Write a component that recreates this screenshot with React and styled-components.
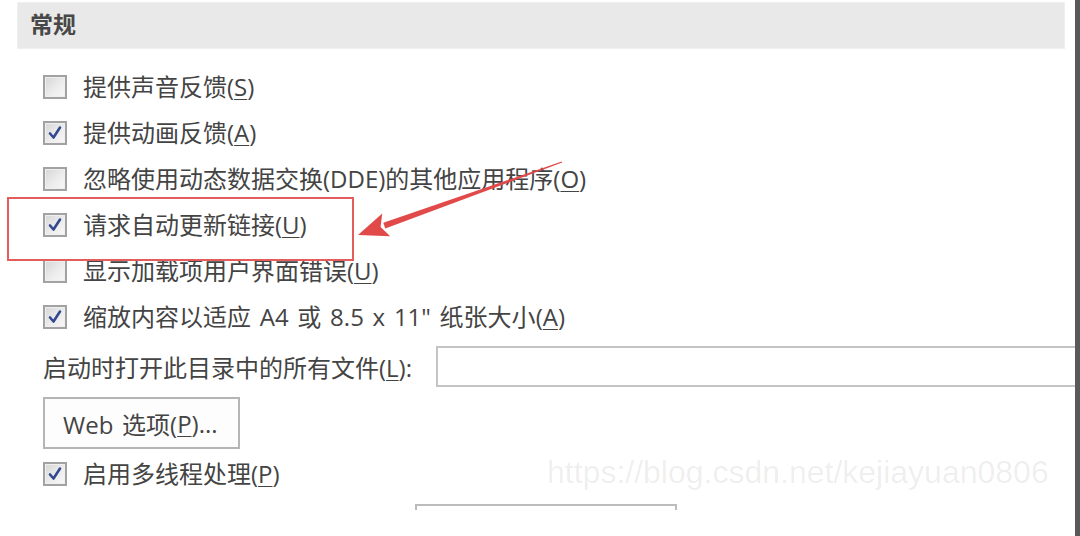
import React from "react";
import styled, { createGlobalStyle } from "styled-components";

const GlobalStyle = createGlobalStyle`
  html, body {
    margin: 0;
    padding: 0;
    background: #fff;
  }
  body {
    font-family: "Open Sans", "Noto Sans CJK SC", sans-serif;
    color: #444;
  }
`;

const Page = styled.div`
  position: relative;
  display: flex;
  width: 1080px;
  height: 536px;
  overflow: hidden;
  background: #fff;
`;

const Main = styled.div`
  flex: 1;
  display: flex;
  flex-direction: column;
  padding-top: 2px;
`;

const Edge = styled.div`
  width: 5px;
  background: #595959;
`;

const SectionHeader = styled.div`
  margin-left: 17px;
  width: 1048px;
  height: 47px;
  box-sizing: border-box;
  display: flex;
  align-items: center;
  padding: 0 0 5px 12px;
  background: #e9e9e9;
  border: 1px solid #efefef;
  font-family: "Noto Sans CJK SC", sans-serif;
  font-size: 23px;
  font-weight: 700;
  color: #484848;
`;

const Options = styled.div`
  display: flex;
  flex-direction: column;
  padding-left: 43px;
  margin-top: 15px;
  font-size: 24px;
  word-spacing: 2.5px;
`;

const Row = styled.label`
  display: flex;
  align-items: center;
  gap: 16px;
  height: 46px;
  margin-top: ${(p) => p.$top || 0}px;
  line-height: 1.2;
`;

const Box = styled.span`
  position: relative;
  width: 24px;
  height: 24px;
  box-sizing: border-box;
  flex: none;
  border: 2px solid #a2a2a2;
  background: linear-gradient(135deg, #d6d6d6 0%, #ececec 55%, #f8f8f8 100%);
  box-shadow: inset 0 0 0 1px #efefef;

  svg {
    position: absolute;
    left: 1px;
    top: 1px;
  }
`;

const Key = styled.span`
  text-decoration: underline;
  text-underline-offset: 3px;
  text-decoration-thickness: 1px;
`;

const FieldRow = styled.div`
  display: flex;
  align-items: center;
  margin-top: 6px;
  height: 41px;
`;

const FieldLabel = styled.span`
  width: 393px;
  flex: none;
  white-space: nowrap;
`;

const PathInput = styled.div`
  flex: 1;
  height: 41px;
  box-sizing: border-box;
  border: 2px solid #c4c4c4;
  border-right: none;
  background: #fff;
`;

const Button = styled.div`
  display: flex;
  align-items: center;
  width: 197px;
  height: 52px;
  box-sizing: border-box;
  margin-top: 10px;
  padding-left: 18px;
  border: 2px solid #b5b5b5;
  background: #fdfdfd;
  white-space: pre;
`;

const ListBoxTop = styled.div`
  margin-left: 415px;
  margin-top: 7px;
  width: 262px;
  height: 6px;
  box-sizing: border-box;
  border: 2px solid #bcbcbc;
  border-bottom: none;
`;

const Highlight = styled.div`
  position: absolute;
  left: 7px;
  top: 197px;
  width: 347px;
  height: 64px;
  box-sizing: border-box;
  border: 2px solid #e35d5d;
`;

const Arrow = styled.svg`
  position: absolute;
  left: 0;
  top: 0;
  pointer-events: none;
`;

const Watermark = styled.div`
  position: absolute;
  left: 547px;
  top: 454px;
  font-family: "Liberation Sans", Arial, sans-serif;
  font-size: 32px;
  color: rgba(0, 0, 0, 0.075);
  white-space: nowrap;
`;

const Check = ({ checked }) => (
  <Box>
    {checked && (
      <svg width="18" height="18" viewBox="0 0 18 18">
        <path
          d="M4 9.5 L7.5 13.5 L14 3.5"
          fill="none"
          stroke="#34478f"
          strokeWidth="2.6"
          strokeLinecap="round"
          strokeLinejoin="round"
        />
      </svg>
    )}
  </Box>
);

const options = [
  { text: "提供声音反馈", key: "S", checked: false },
  { text: "提供动画反馈", key: "A", checked: true },
  { text: "忽略使用动态数据交换(DDE)的其他应用程序", key: "O", checked: false },
  { text: "请求自动更新链接", key: "U", checked: true },
  { text: "显示加载项用户界面错误", key: "U", checked: false },
  { text: "缩放内容以适应 A4 或 8.5 x 11\" 纸张大小", key: "A", checked: true },
];

export default function App() {
  return (
    <>
      <GlobalStyle />
      <Page>
        <Main>
          <SectionHeader>常规</SectionHeader>
          <Options>
            {options.map((o, i) => (
              <Row key={i}>
                <Check checked={o.checked} />
                <span>
                  {o.text}(<Key>{o.key}</Key>)
                </span>
              </Row>
            ))}
            <FieldRow>
              <FieldLabel>
                启动时打开此目录中的所有文件(<Key>L</Key>):
              </FieldLabel>
              <PathInput />
            </FieldRow>
            <Button>
              Web 选项(<Key>P</Key>)...
            </Button>
            <Row $top={2}>
              <Check checked />
              <span>
                启用多线程处理(<Key>P</Key>)
              </span>
            </Row>
          </Options>
          <ListBoxTop />
        </Main>
        <Edge />

        <Highlight />
        <Arrow width="1080" height="536" viewBox="0 0 1080 536">
          <polygon
            points="562.2,162.5 561.8,161.5 383.3,222.8 385.3,228.4"
            fill="#e24a4a"
          />
          <polygon
            points="358,235 382.2,213.6 380.6,226.9 390.2,236.2"
            fill="#e24a4a"
          />
        </Arrow>
        <Watermark>https://blog.csdn.net/kejiayuan0806</Watermark>
      </Page>
    </>
  );
}
